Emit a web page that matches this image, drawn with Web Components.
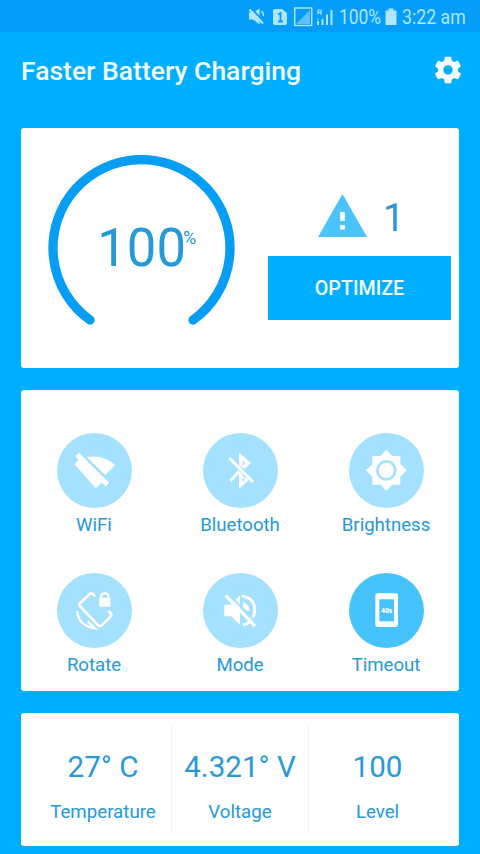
<!DOCTYPE html>
<html lang="en">
<head>
<meta charset="utf-8">
<title>Faster Battery Charging</title>
<style>
html,body{margin:0;height:100%;overflow:hidden}
body{background:#00aeff;font-family:Roboto,"Liberation Sans",sans-serif;color:#2699d8}
</style>
</head>
<body>
<battery-app></battery-app>
<script>
function define(name, html) {
  const t = document.createElement('template');
  t.innerHTML = html;
  customElements.define(name, class extends HTMLElement {
    constructor() {
      super();
      this.attachShadow({mode: 'open'}).append(t.content.cloneNode(true));
    }
  });
}

define('status-bar', `
<style>
:host{display:flex;box-sizing:border-box;height:32px;background:#069df8;color:#aee6fd;padding-left:248px;align-items:center;font-size:20px;line-height:32px;white-space:nowrap}
svg{display:block;flex:none}
.pct,.time{flex:none;padding-top:2px;transform-origin:0 50%}
.pct{width:45px;margin-left:-1px;margin-right:1px;transform:scaleX(.87)}
.time{transform:scaleX(.885)}
</style>
<svg width="92" height="32" viewBox="248 0 92 32" fill="#aee6fd">
 <path d="M249 12.500h4l6.500-4v16l-6.500-5h-4z"/><path d="M250 7l15 16" stroke="#069df8" stroke-width="2"/><path d="M249.500 9.500l13.500 14" stroke="#aee6fd" stroke-width="2.200"/><path d="M261.500 11q2 2 2 5" fill="none" stroke="#aee6fd" stroke-width="1.500"/>
 <path d="M275 9h7l5 4v10q0 2-2 2h-10q-2 0-2-2V11q0-2 2-2z"/><path d="M278 14.500l2.500-1.500v8.500m-2.500 0h5" fill="none" stroke="#069df8" stroke-width="1.800"/>
 <rect x="294.700" y="8" width="17" height="17.500" fill="none" stroke="#aee6fd" stroke-width="1.400"/><path d="M310 10v14h-14z" fill="#5cc0fb"/>
 <path d="M318 14.500V10h2q1.500 0 1.500 1.200t-1.500 1.200h-2m2 0l1.700 2.200" fill="none" stroke="#aee6fd" stroke-width="1.100"/>
 <path d="M317 21h2v4h-2zM317 18.500h1.500v1H317zM321.500 19h2v6h-2zM326 14.500h2V25h-2zM330.500 10h2v15h-2z"/>
</svg>
<span class="pct">100%</span>
<svg width="17" height="32" viewBox="385 0 17 32" fill="#aee6fd"><path d="M388.500 8.500h5v2h3V25h-11V10.500h3z"/></svg>
<span class="time">3:22 am</span>`);

define('app-bar', `
<style>
:host{display:flex;box-sizing:border-box;height:96px;padding:0 16px 18px 21px;align-items:center;justify-content:space-between;color:#f4fdff}
h1{margin:0;font-size:26.500px;font-weight:500;line-height:32px;white-space:nowrap}
svg{display:block;margin-bottom:3px}
</style>
<h1><slot></slot></h1>
<svg width="32" height="32" viewBox="0 0 24 24" fill="currentColor"><path d="M19.430 12.980c.04-.32.07-.64.07-.98s-.03-.66-.07-.98l2.110-1.650c.19-.15.24-.42.12-.64l-2-3.460c-.12-.22-.39-.3-.61-.22l-2.490 1c-.52-.4-1.080-.73-1.690-.98l-.38-2.650C14.460 2.180 14.250 2 14 2h-4c-.25 0-.46.18-.49.42l-.38 2.650c-.61.25-1.170.59-1.690.98l-2.490-1c-.23-.09-.49 0-.61.22l-2 3.460c-.13.22-.07.49.12.64l2.110 1.650c-.04.32-.07.65-.07.98s.03.66.07.98l-2.110 1.650c-.19.15-.24.42-.12.64l2 3.460c.12.22.39.3.61.22l2.490-1c.52.4 1.080.73 1.690.98l.38 2.650c.03.24.24.42.49.42h4c.25 0 .46-.18.49-.42l.38-2.650c.61-.25 1.170-.59 1.690-.98l2.490 1c.23.09.49 0 .61-.22l2-3.460c.12-.22.07-.49-.12-.64l-2.110-1.650zM12 15.500c-1.930 0-3.500-1.570-3.500-3.500s1.570-3.500 3.500-3.500 3.500 1.570 3.500 3.500-1.570 3.500-3.500 3.500z"/></svg>`);

define('info-card', `
<style>:host{display:block;box-sizing:border-box;background:#fff;border-radius:3px}</style>
<slot></slot>`);

define('battery-gauge', `
<style>
:host{display:grid;width:187px;height:187px}
svg,.value{grid-area:1/1}
.value{display:flex;justify-content:flex-end;align-items:flex-start;padding:61px 38.500px 0 0;line-height:1}
.num{font-size:54px;line-height:64px;transform:scaleX(.975);transform-origin:100% 50%}
.unit{font-size:19px;line-height:22px;margin:11px 0 0 -4px;width:14px;transform:scaleX(.95);transform-origin:0 50%}
</style>
<svg width="187" height="187" viewBox="48 155 187 187"><path d="M90 320A88.500 88.500 0 1 1 193 320" fill="none" stroke="#069ef5" stroke-width="9.300" stroke-linecap="round"/></svg>
<div class="value"><span class="num"><slot></slot></span><span class="unit">%</span></div>`);

define('optimize-panel', `
<style>
:host{display:flex;flex-direction:column;width:183px}
.alert{display:flex;align-items:flex-start;height:62px;padding-left:50px;gap:16px;font-size:38px}
.alert span{line-height:44px;padding-top:2px}
svg{display:block}
button{all:unset;box-sizing:border-box;height:64px;background:#00aeff;color:#f0fcff;font-size:19.700px;font-weight:500;text-align:center;line-height:65px}
</style>
<div class="alert"><svg width="49" height="43" viewBox="0 0 49 43"><path d="M24.500 0L49 43H0z" fill="#4ac4fb"/><path d="M22.200 18h4.600v9h-4.600zM22.200 31h4.600v4.500h-4.600z" fill="#fff"/></svg><span><slot name="count"></slot></span></div>
<button><slot></slot></button>`);

define('toggle-item', `
<style>
:host{display:flex;flex-direction:column;align-items:center;height:140px;font-size:18.600px}
.disc{width:75px;height:75px;border-radius:50%;background:#a4e1fe}
:host([active]) .disc{background:#47c3fb}
::slotted(svg){display:block;width:75px;height:75px}
.label{line-height:22px;margin-top:5.500px;white-space:nowrap}
</style>
<div class="disc"><slot name="icon"></slot></div>
<div class="label"><slot></slot></div>`);

define('stat-cell', `
<style>
:host{display:flex;flex-direction:column;align-items:center;box-sizing:border-box;height:106px;padding-top:22px;white-space:nowrap}
:host(:not(:last-child)){border-right:1px solid #e0f4fb}
.v{font-size:29.600px;line-height:38px}
.l{font-size:18.700px;line-height:22px;margin-top:15px}
</style>
<div class="v"><slot name="value"></slot></div><div class="l"><slot></slot></div>`);

define('battery-app', `
<style>
:host{display:block;width:480px;height:854px;overflow:hidden}
main{display:flex;flex-direction:column;gap:21.500px;padding:0 21px}
.charge{height:240px}
.row{display:flex;padding:27px 0 0 27px;gap:33px}
optimize-panel{margin-top:39px}
.toggles{height:301.500px}
.grid{display:grid;grid-template-columns:repeat(3,146px);padding-top:43.500px}
.stats{height:133.500px}
.cells{display:grid;grid-template-columns:repeat(3,137px);padding:13px 0 0 14px}
</style>
<status-bar></status-bar>
<app-bar>Faster Battery Charging</app-bar>
<main>
<info-card class="charge"><div class="row"><battery-gauge>100</battery-gauge><optimize-panel><span slot="count">1</span>OPTIMIZE</optimize-panel></div></info-card>
<info-card class="toggles"><div class="grid">
<toggle-item><svg slot="icon" viewBox="34.500 24 225 225" fill="#fff"><path d="M100 83L191 173 181 184 169 173 151 190 87 118 99 105 90 93z"/><path d="M124 97Q170 86 209 120L179 150z"/></svg>WiFi</toggle-item>
<toggle-item><svg slot="icon" viewBox="38 24 225 225" fill="none" stroke="#fff" stroke-width="9"><path d="M117 99L188 171M120 167L147 139M151 117V94L174 115 160 129M151 143V181L171 162"/><path d="M147 83v37l9 9 26-15zM147 145v45l27-24z" fill="#fff" stroke="none"/><path d="M157 107l7 8-7 7zM157 157l7 7-7 7z" fill="#a4e1fe" stroke="none"/></svg>Bluetooth</toggle-item>
<toggle-item><svg slot="icon" viewBox="41 24 225 225" fill="#fff"><path d="M153 75L171 93H195V117L214 136 195 155V179H171L153 197 135 179H111V155L92 136 111 117V93H135z"/><circle cx="153" cy="136" r="27" fill="none" stroke="#a4e1fe" stroke-width="8"/></svg>Brightness</toggle-item>
<toggle-item><svg slot="icon" viewBox="34.500 24 225 225" fill="none" stroke="#fff" stroke-width="8"><path d="M149 94L142 87Q138 83 133 87L104 114Q99 119 104 124L157 180Q163 186 169 181L195 155Q200 149 195 144L188 137"/><path d="M95 138Q98 182 148 190L127 169" stroke-width="7"/><path d="M161 98h34v27h-34z" fill="#fff" stroke="none"/><path d="M167 101V94Q167 85 178 85T189 94V101" stroke-width="7"/></svg>Rotate</toggle-item>
<toggle-item><svg slot="icon" viewBox="38 24 225 225" fill="none" stroke="#fff" stroke-width="9"><path d="M102 119h20l27-28v88l-27-25h-20z" fill="#fff" stroke="none"/><path d="M154 93Q193 99 193 135Q193 153 183 163M158 179Q172 178 180 169"/><path d="M158 110Q178 119 178 139L158 134z" fill="#fff" stroke="none"/><path d="M112 85L202 176" stroke="#a4e1fe" stroke-width="6"/><path d="M106 91L194 183" stroke-width="10"/></svg>Mode</toggle-item>
<toggle-item active><svg slot="icon" viewBox="41 24 225 225"><path fill="#fff" fill-rule="evenodd" d="M127 85h54q7 0 7 7v87q0 7-7 7h-54q-7 0-7-7V92q0-7 7-7zM132 103v66h44v-66z"/><text x="137" y="143" textLength="34" lengthAdjust="spacingAndGlyphs" font-size="19" font-weight="900" fill="#fff" font-family="Roboto,sans-serif">40s</text></svg>Timeout</toggle-item>
</div></info-card>
<info-card class="stats"><div class="cells">
<stat-cell><span slot="value">27° C</span>Temperature</stat-cell>
<stat-cell><span slot="value">4.321° V</span>Voltage</stat-cell>
<stat-cell><span slot="value">100</span>Level</stat-cell>
</div></info-card>
</main>`);
</script>
</body>
</html>
